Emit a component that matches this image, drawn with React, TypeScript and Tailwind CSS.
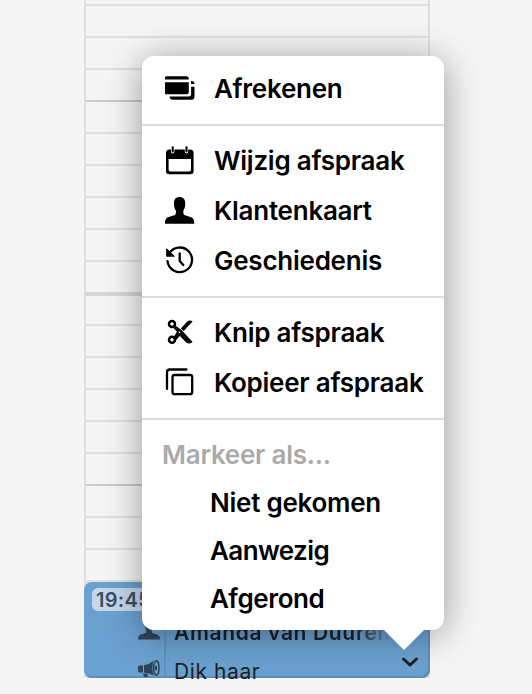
import type { ReactNode } from "react";

const slots = [
  "h-[6px] border-b-2 border-[#dfdfdf]",
  "h-8 border-b-2 border-[#dfdfdf]",
  "h-8 border-b-2 border-[#dfdfdf]",
  "h-8 border-b-2 border-[#c9c9c9]",
  "h-8 border-b-2 border-[#dfdfdf]",
  "h-8 border-b-2 border-[#dfdfdf]",
  "h-8 border-b-2 border-[#dfdfdf]",
  "h-8 border-b-2 border-[#dfdfdf]",
  "h-8 border-b-2 border-[#dfdfdf]",
  "h-[34px] border-b-4 border-[#d6d6d6]",
  "h-[30px] border-b-2 border-[#dfdfdf]",
  "h-8 border-b-2 border-[#dfdfdf]",
  "h-8 border-b-2 border-[#dfdfdf]",
  "h-8 border-b-2 border-[#dfdfdf]",
  "h-8 border-b-2 border-[#dfdfdf]",
  "h-8 border-b-2 border-[#c9c9c9]",
  "h-8 border-b-2 border-[#dfdfdf]",
  "h-8 border-b-2 border-[#dfdfdf]",
  "h-8 border-b-2 border-[#dfdfdf]",
];

function CardsIcon() {
  return (
    <svg className="h-8 w-8" viewBox="1.500 -0.300 32 32" fill="currentColor">
      <path d="M.5 6.200V5.500Q.5 3 3 3H23Q25.300 3 25.300 5.500V6.200Z" />
      <path d="M.5 9H25.300V18.500Q25.300 21 23 21H3Q.5 21 .5 18.500Z" />
      <path d="M27.600 10.800V7.500Q31 8 31 10.800ZM27.600 13.500H31V23.500Q31 26.500 28 26.500H9.500Q6.500 26.500 6 23.200H25.500Q27.600 23.200 27.600 21.500Z" />
    </svg>
  );
}

function CalendarIcon() {
  return (
    <svg className="h-8 w-8" viewBox="0 -1 32 32" fill="currentColor">
      <path
        fillRule="evenodd"
        d="M4.500 3.600H6V5.500Q6 7.400 7.700 7.400T9.400 5.500V3.600H19.800V5.500Q19.800 7.400 21.500 7.400T23.200 5.500V3.600H25Q28.600 3.600 28.600 7.200V25Q28.600 28.200 25.400 28.200H4.200Q1 28.200 1 25V7.200Q1 3.600 4.500 3.600ZM3.600 13V23.500Q3.600 25.600 5.700 25.600H23.900Q26 25.600 26 23.500V13Z"
      />
      <rect x="6.700" y="0.200" width="2" height="6.200" rx="1" />
      <rect x="20.500" y="0.200" width="2" height="6.200" rx="1" />
    </svg>
  );
}

function PersonIcon() {
  return (
    <svg className="h-8 w-8" viewBox="0 -1 32 32" fill="currentColor">
      <path d="M14.600 1C18.200 1 20.200 3.400 20.200 6.800C20.200 9 20.300 11.500 18.800 13.800C18 15.200 18.100 18.400 19.300 19L26.200 21.300C28.500 22.200 29.300 24 29.300 27.700H0C0 24 .7 22.200 3 21.300L10 19C11.200 18.400 11.300 15.200 10.400 13.800C9 11.500 9 9 9 6.800C9 3.400 11 1 14.600 1Z" />
    </svg>
  );
}

function HistoryIcon() {
  return (
    <svg className="h-8 w-8" viewBox="0 -1 32 32" fill="none" stroke="currentColor" strokeWidth="2.300" strokeLinecap="round" strokeLinejoin="round">
      <path d="M4 7.800A12.300 12.300 0 1 1 2.500 15.200" />
      <path d="M14.700 7.500V15L18.300 19" />
      <path d="M1.700 3.200V10.200H9Z" fill="currentColor" strokeWidth="1" />
    </svg>
  );
}

function ScissorsIcon() {
  return (
    <svg className="h-8 w-8" viewBox="0 -0.300 32 32" fill="none" stroke="currentColor" strokeWidth="2.500">
      <circle cx="7" cy="6.600" r="3" />
      <circle cx="7" cy="22.400" r="3" />
      <path
        d="M9.200 7.400L16.500 12.800L27.600 24.800Q24.500 27.500 21 25L14.800 18.600L9.800 24.200L8 20.500L12 14.500L7.200 9.500Z"
        fill="currentColor"
        stroke="none"
      />
      <path d="M15.800 11.300L22 4.500Q25 2.300 27.600 4.200L18.600 13.800Z" fill="currentColor" stroke="none" />
      <circle cx="14.500" cy="15" r="0.900" fill="white" stroke="none" />
    </svg>
  );
}

function CopyIcon() {
  return (
    <svg className="h-8 w-8" viewBox="0.400 -0.400 32 32" fill="none" stroke="currentColor" strokeWidth="2.300" strokeLinecap="round">
      <path d="M2.400 21.500V4.800Q2.400 2.100 5.100 2.100H21.800" />
      <rect x="7.900" y="7.600" width="19.700" height="19.200" rx="2.200" />
    </svg>
  );
}

function MegaphoneIcon() {
  return (
    <svg className="h-[17px] w-[22px]" viewBox="0 0 22 17" fill="currentColor">
      <path d="M1.500 5.500H5V12.500H1.500Q0 12.500 0 11V7Q0 5.500 1.500 5.500ZM6 5.300Q11 4.500 15.500 .8Q13.300 8 15.500 15.500Q11 13 6 12.500ZM4.700 13.500H9.200L10.500 19H7Z" />
      <ellipse cx="18.300" cy="8" rx="2.700" ry="7.200" fill="none" stroke="currentColor" strokeWidth="1.500" />
      <ellipse cx="17.900" cy="8" rx="1.200" ry="2.600" />
    </svg>
  );
}

function Item({ icon, children }: { icon: ReactNode; children: ReactNode }) {
  return (
    <li className="flex h-[50px] items-center pl-[23px]">
      {icon}
      <span className="ml-[17px]">{children}</span>
    </li>
  );
}

function Appointment() {
  return (
    <div className="relative h-24 rounded-[8px] bg-[#6ba1d0] text-[#1b1f24] shadow-[inset_-2px_-2px_0_#5a8fba]">
      <div className="flex h-[94px]">
        <div className="flex w-[82px] flex-col items-end border-r-2 border-[#6093bf] pr-1 text-[#2f4458]">
          <span className="mt-[6px] mr-auto ml-2 flex h-[23px] w-[70px] shrink-0 items-center rounded-[6px] bg-[#c4d8eb] pt-px pl-1 text-[20px] font-semibold tracking-[0.3px] text-[#3c4f62]">
            19:45
          </span>
          <div className="mt-[7px] h-[22px] w-[22px] shrink-0 [&>svg]:h-6 [&>svg]:w-6">
            <PersonIcon />
          </div>
          <div className="mt-5 shrink-0">
            <MegaphoneIcon />
          </div>
        </div>
        <div className="flex flex-col pt-[37px] pl-2 text-[21px] leading-[28px] whitespace-nowrap">
          <span className="bg-linear-to-r from-[#1b1f24] from-83% to-[#6ba1d0] bg-clip-text font-semibold tracking-[0.65px] text-transparent">
            Amanda van Duuren
          </span>
          <span className="mt-[15px] leading-5 tracking-[0.6px]">Dik haar</span>
        </div>
      </div>
      <svg className="absolute right-[11px] bottom-[10px] h-3 w-[18px]" viewBox="0 0 18 12" fill="none" stroke="currentColor" strokeWidth="3" strokeLinecap="round" strokeLinejoin="round">
        <path d="M2.500 3L9 9L15.500 3" />
      </svg>
    </div>
  );
}

function Menu() {
  return (
    <div className="absolute top-14 left-[142px] h-[574px] w-[302px] rounded-[12px] bg-white text-[26px] leading-8 font-semibold tracking-[-0.25px] whitespace-nowrap text-black shadow-[0_4px_36px_rgba(0,0,0,0.38)]">
      <ul className="border-b-2 border-[#dcdcdc] pt-2 pb-[10px]">
        <Item icon={<CardsIcon />}>Afrekenen</Item>
      </ul>
      <ul className="border-b-2 border-[#dcdcdc] py-[10px]">
        <Item icon={<CalendarIcon />}>Wijzig afspraak</Item>
        <Item icon={<PersonIcon />}>Klantenkaart</Item>
        <Item icon={<HistoryIcon />}>Geschiedenis</Item>
      </ul>
      <ul className="border-b-2 border-[#dcdcdc] py-[10px]">
        <Item icon={<ScissorsIcon />}>Knip afspraak</Item>
        <Item icon={<CopyIcon />}>Kopieer afspraak</Item>
      </ul>
      <div className="pt-[11px]">
        <p className="flex h-12 items-center pl-5 text-[#aaaaaa]">Markeer als...</p>
        <ul className="pl-[68px]">
          <li className="flex h-12 items-center">Niet gekomen</li>
          <li className="flex h-12 items-center tracking-[-0.6px]">Aanwezig</li>
          <li className="flex h-12 items-center tracking-[-0.4px]">Afgerond</li>
        </ul>
      </div>
      <svg className="absolute top-full right-5 h-5 w-10" viewBox="0 0 40 20" fill="white">
        <path d="M0 0H40L20 20Z" />
      </svg>
    </div>
  );
}

export default function App() {
  return (
    <main className="relative h-[694px] w-[532px] overflow-hidden bg-[#f5f5f5] font-['Inter',sans-serif]">
      <div className="ml-[84px] h-[678px] w-[346px] bg-[#dfdfdf]">
        <div className="px-[2px]">
          {slots.map((slot, i) => (
            <div key={i} className={`bg-[#f5f5f5] ${slot}`} />
          ))}
        </div>
        <Appointment />
      </div>
      <Menu />
    </main>
  );
}
